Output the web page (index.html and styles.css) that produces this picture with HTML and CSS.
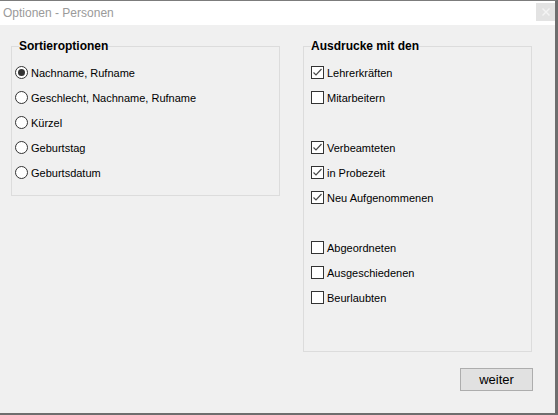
FILE: index.html
```html
<!DOCTYPE html>
<html lang="de">
<head>
<meta charset="utf-8">
<title>Optionen - Personen</title>
<link rel="stylesheet" href="styles.css">
</head>
<body>
<div class="window">
  <div class="titlebar">
    <span class="title">Optionen - Personen</span>
    <span class="close">
      <svg width="8" height="8" viewBox="0 0 8 8"><path d="M0.5 0.5 L7.5 7.5 M7.5 0.5 L0.5 7.5" stroke="#f4f4f4" stroke-width="1.4" fill="none"/></svg>
    </span>
  </div>
  <div class="content">
    <div class="groups">
      <fieldset class="group group-sort">
        <legend>Sortieroptionen</legend>
        <label class="row"><span class="radio is-on"></span>Nachname, Rufname</label>
        <label class="row"><span class="radio"></span>Geschlecht, Nachname, Rufname</label>
        <label class="row"><span class="radio"></span>Kürzel</label>
        <label class="row"><span class="radio"></span>Geburtstag</label>
        <label class="row"><span class="radio"></span>Geburtsdatum</label>
      </fieldset>
      <fieldset class="group group-print">
        <legend>Ausdrucke mit den</legend>
        <label class="row"><span class="check"><svg width="11" height="11" viewBox="0 0 11 11"><path d="M1.5 5.5 L4 8 L9.5 2" stroke="#4a4a4a" stroke-width="1.2" fill="none"/></svg></span>Lehrerkräften</label>
        <label class="row"><span class="check"></span>Mitarbeitern</label>
        <div class="spacer"></div>
        <label class="row"><span class="check"><svg width="11" height="11" viewBox="0 0 11 11"><path d="M1.5 5.5 L4 8 L9.5 2" stroke="#4a4a4a" stroke-width="1.2" fill="none"/></svg></span>Verbeamteten</label>
        <label class="row"><span class="check"><svg width="11" height="11" viewBox="0 0 11 11"><path d="M1.5 5.5 L4 8 L9.5 2" stroke="#4a4a4a" stroke-width="1.2" fill="none"/></svg></span>in Probezeit</label>
        <label class="row"><span class="check"><svg width="11" height="11" viewBox="0 0 11 11"><path d="M1.5 5.5 L4 8 L9.5 2" stroke="#4a4a4a" stroke-width="1.2" fill="none"/></svg></span>Neu Aufgenommenen</label>
        <div class="spacer"></div>
        <label class="row"><span class="check"></span>Abgeordneten</label>
        <label class="row"><span class="check"></span>Ausgeschiedenen</label>
        <label class="row"><span class="check"></span>Beurlaubten</label>
      </fieldset>
    </div>
    <div class="actions">
      <button class="btn" type="button">weiter</button>
    </div>
  </div>
</div>
</body>
</html>
```

FILE: styles.css
```css
* { box-sizing: border-box; }

html, body {
  margin: 0;
  padding: 0;
  background: #f0f0f0;
}

body {
  font-family: "Liberation Sans", Arial, sans-serif;
  color: #000;
}

.window {
  width: 558px;
  height: 415px;
  display: flex;
  flex-direction: column;
  border-top: 1px solid #7c7c7c;
  border-right: 3px solid #6e6e6e;
  border-bottom: 2px solid #6e6e6e;
  background: #f0f0f0;
}

/* title bar */
.titlebar {
  height: 24px;
  flex: none;
  display: flex;
  justify-content: space-between;
  align-items: flex-start;
  background: #fff;
  padding-left: 3px;
}

.title {
  font-size: 12px;
  line-height: 24px;
  color: #9a9a9a;
}

.close {
  width: 19px;
  height: 18px;
  margin-top: 2px;
  background: #e3e3e3;
  display: flex;
  align-items: center;
  justify-content: center;
}

.close svg { display: block; }

/* dialog body */
.content {
  flex: 1;
  padding: 14px 22px 0 11px;
  display: flex;
  flex-direction: column;
}

.groups {
  display: flex;
  align-items: flex-start;
  gap: 23px;
}

.group {
  margin: 0;
  border: 1px solid #dcdcdc;
  min-width: 0;
}

.group legend {
  font-size: 12px;
  font-weight: bold;
  line-height: 14px;
  padding: 0;
}

.group-sort {
  width: 269px;
  padding: 7px 3px 10px 3px;
}

.group-sort legend { margin-left: 4px; }

.group-print {
  width: 229px;
  padding: 7px 7px 41px 7px;
}

.group-print legend { margin-left: 0; }

.row {
  height: 25px;
  display: flex;
  align-items: center;
  gap: 3px;
  font-size: 11px;
  white-space: nowrap;
}

.spacer { height: 25px; }

.radio {
  width: 13px;
  height: 13px;
  flex: none;
  border: 1px solid #333;
  border-radius: 50%;
  background: #fff;
  display: flex;
  align-items: center;
  justify-content: center;
}

.radio.is-on::after {
  content: "";
  width: 7px;
  height: 7px;
  border-radius: 50%;
  background: #333;
}

.check {
  width: 13px;
  height: 13px;
  flex: none;
  border: 1px solid #333;
  background: #fff;
}

.check svg { display: block; }

.actions {
  display: flex;
  justify-content: flex-end;
  margin-top: 16px;
}

.btn {
  width: 73px;
  height: 23px;
  margin: 0;
  padding: 0;
  border: 1px solid #adadad;
  background: #e1e1e1;
  font-family: "Liberation Sans", Arial, sans-serif;
  font-size: 13px;
  color: #000;
}
```
